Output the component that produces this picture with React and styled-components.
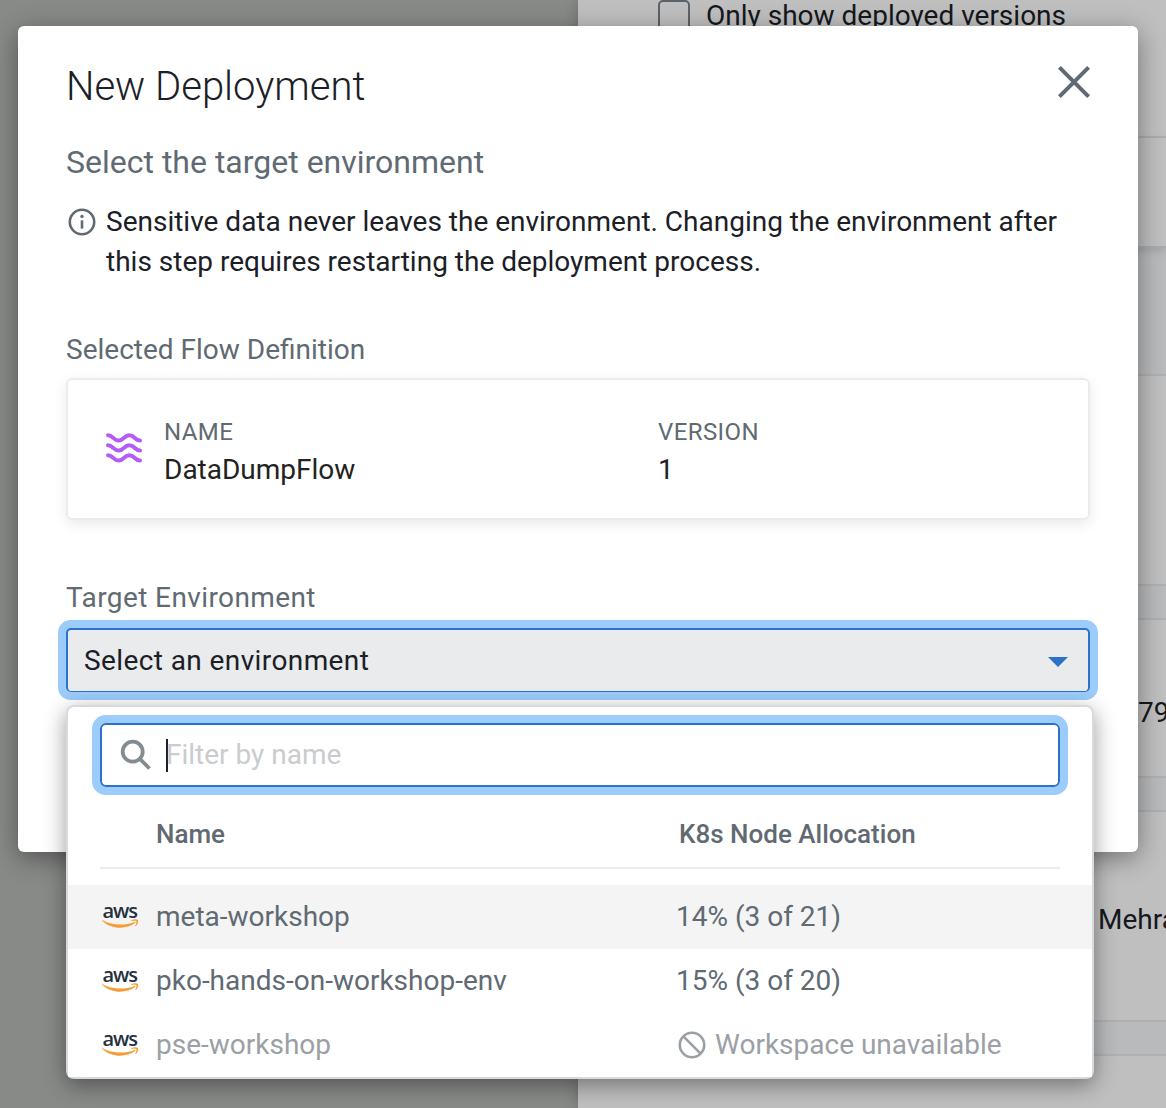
import React from "react";
import styled, { createGlobalStyle } from "styled-components";

const GlobalStyle = createGlobalStyle`
  *, *::before, *::after { box-sizing: border-box; }
  body { margin: 0; overflow: hidden; font-family: Roboto, "Noto Sans", sans-serif; }
  h1, h2, p { margin: 0; font-weight: 400; }
  svg { display: block; flex: none; }
`;

const Page = styled.main`
  position: relative;
  width: 1166px;
  height: 1108px;
  overflow: hidden;
  display: grid;
  grid-template-columns: 578px 1fr;
  background: #888a88;
  color: #1b2026;
  font-size: 28px;
  line-height: 40px;
`;

const SidePanel = styled.aside`
  grid-column: 2;
  display: flex;
  flex-direction: column;
  overflow: hidden;
  background: #bfbfbf;
  box-shadow: 0 0 12px rgba(0, 0, 0, 0.22);
  color: #14181c;
`;

const PanelSection = styled.section`
  flex: none;
  display: flex;
  align-items: ${(p) => p.$align || "center"};
  height: ${(p) => p.$height}px;
  padding-top: ${(p) => p.$drop || 0}px;
  padding-left: ${(p) => p.$indent || 0}px;
  background: ${(p) => (p.$band ? "#b8babc" : "#bfbfbf")};
  border-bottom: 2px solid #aeb0b1;
  white-space: nowrap;
`;

const RaisedSection = styled(PanelSection)`
  position: relative;
  border-bottom-color: #a9abac;
  box-shadow: 0 3px 8px rgba(0, 0, 0, 0.12);
`;

const CheckLabel = styled.label`
  display: flex;
  align-items: center;
  gap: 16px;
  height: 32px;
`;

const Checkbox = styled.span`
  width: 32px;
  height: 32px;
  border: 2px solid #5b6268;
  border-radius: 5px;
`;

const Dialog = styled.section`
  position: absolute;
  left: 18px;
  top: 26px;
  width: 1120px;
  height: 826px;
  padding: 36px 48px 0;
  border-radius: 6px;
  background: #fff;
  box-shadow: 0 6px 26px rgba(0, 0, 0, 0.4);
`;

const DialogHeader = styled.header`
  display: flex;
  align-items: center;
  justify-content: space-between;
  height: 48px;
`;

const Title = styled.h1`
  padding-top: 1px;
  font-size: 40px;
  line-height: 48px;
  font-weight: 300;
`;

const CloseButton = styled.button`
  padding: 0;
  border: 0;
  background: none;
  margin-top: -8px;
`;

const Subtitle = styled.h2`
  margin-top: 32px;
  color: #5f6a72;
  font-size: 32px;
  line-height: 40px;
`;

const Notice = styled.p`
  display: flex;
  gap: 10px;
  margin-top: 20px;
  padding-left: 2px;

  svg { margin-top: 6px; }
`;

const FieldLabel = styled.div`
  margin-top: ${(p) => p.$top}px;
  height: 40px;
  color: #5f6a72;
  letter-spacing: ${(p) => p.$spacing || 0}px;
`;

const FlowCard = styled.div`
  display: grid;
  grid-template-columns: 58px 494px 1fr;
  align-items: center;
  height: 142px;
  margin-top: 8px;
  padding: 0 38px;
  border: 2px solid #ebebeb;
  border-radius: 6px;
  box-shadow: 0 4px 14px rgba(0, 0, 0, 0.09);

  > svg { margin-bottom: 2px; }
`;

const Detail = styled.div`
  display: flex;
  flex-direction: column;
  padding-top: 6px;
  color: #222;
`;

const DetailLabel = styled.span`
  color: #5f6a72;
  font-size: 24px;
  line-height: 36px;
  letter-spacing: 0.4px;
`;

const SelectBox = styled.div`
  display: flex;
  align-items: center;
  justify-content: space-between;
  height: 64px;
  margin-top: 10px;
  padding: 0 20px 0 16px;
  border: 2px solid #2d72c9;
  border-bottom-width: 1px;
  border-radius: 5px;
  background: #e9ebec;
  box-shadow: 0 0 0 8px #9cccfb;
  letter-spacing: 0.4px;

  svg { margin-top: 2px; }
`;

const Dropdown = styled.section`
  position: absolute;
  left: 66px;
  top: 705px;
  width: 1028px;
  height: 374px;
  padding-top: 16px;
  border: 2px solid #d7d9de;
  border-radius: 8px;
  background: #fff;
  box-shadow: 0 6px 22px rgba(0, 0, 0, 0.4);
  color: #5f6a72;
`;

const SearchField = styled.div`
  display: flex;
  align-items: center;
  height: 64px;
  margin: 0 32px;
  padding-left: 18px;
  border: 2px solid #2d72c9;
  border-radius: 6px;
  box-shadow: 0 0 0 8px #9cccfb;
  color: #cacccf;
`;

const Caret = styled.span`
  width: 2px;
  height: 33px;
  margin: 0 -2px 0 14px;
  background: #1b2026;
`;

const TableHeader = styled.div`
  display: grid;
  grid-template-columns: 523px 1fr;
  align-items: center;
  height: 82px;
  margin: 0 32px 16px;
  padding: 14px 0 0 56px;
  border-bottom: 2px solid #ebebeb;
  font-size: 26px;
  font-weight: 500;
`;

const Row = styled.div`
  display: grid;
  grid-template-columns: 56px 520px 1fr;
  align-items: center;
  height: 64px;
  padding-left: 32px;
  background: ${(p) => (p.$active ? "#f4f4f4" : "#fff")};
  color: ${(p) => (p.$disabled ? "#9aa0a5" : "#5f6a72")};
`;

const Allocation = styled.span`
  display: flex;
  align-items: center;
  gap: 9px;
  padding-left: ${(p) => (p.$icon ? 2 : 0)}px;
`;

const AwsMark = styled.span`
  display: flex;
  flex-direction: column;
  width: 40px;
  height: 28px;
  padding-left: 2px;
  color: #252f3e;
  font: 600 20px/16px "Open Sans", "Noto Sans", sans-serif;
  letter-spacing: -1.1px;
`;

const AwsWord = styled.span`
  padding-left: 0.5px;
`;

function AwsLogo() {
  return (
    <AwsMark>
      <AwsWord>aws</AwsWord>
      <svg width="37" height="10" viewBox="0 0 37 10">
        <path d="M0.6 1.2 C10 6.6 23 6.8 32.4 2.9 C33.3 2.5 34 3.4 33.1 4.1 C24 10.6 9.6 10.4 0.2 1.9 C-.1 1.5 .2 1 .6 1.2Z" fill="#f79c34" />
        <path d="M29.4 1.3 C31.4 .1 34.6 0 35.7 .8 C36.8 1.8 35.8 5.4 33.8 7.2 C33.4 7.5 33.1 7.3 33.3 6.9 C34 5.2 34.8 3 34.3 2.2 C33.7 1.5 31.4 1.7 29.6 1.9 C29.1 2 29 1.6 29.4 1.3Z" fill="#f79c34" />
      </svg>
    </AwsMark>
  );
}

function WavesIcon() {
  return (
    <svg width="36" height="30" viewBox="0 0 36 30" fill="none" stroke="#b45cf8" strokeWidth="4" strokeLinecap="round">
      {[0, 10, 20].map((y) => (
        <path key={y} transform={`translate(0 ${y})`} d="M2 2.2 C7 2.2 7.5 7.6 12.7 7.6 S18 2.2 23.3 2.2 S29 7.6 34 7.6" />
      ))}
    </svg>
  );
}

const environments = [
  { name: "meta-workshop", allocation: "14% (3 of 21)", active: true },
  { name: "pko-hands-on-workshop-env", allocation: "15% (3 of 20)" },
  { name: "pse-workshop", allocation: "Workspace unavailable", disabled: true },
];

export default function App() {
  return (
    <Page>
      <GlobalStyle />
      <SidePanel>
        <PanelSection $height={138} $indent={80} $align="flex-start">
          <CheckLabel><Checkbox />Only show deployed versions</CheckLabel>
        </PanelSection>
        <RaisedSection $height={110} />
        <PanelSection $height={128} $band />
        <PanelSection $height={210} />
        <PanelSection $height={34} $band />
        <PanelSection $height={158} $indent={560} $drop={30}>79</PanelSection>
        <PanelSection $height={34} $band />
        <PanelSection $height={210} $indent={520} $drop={8}>Mehra</PanelSection>
        <PanelSection $height={34} $band />
      </SidePanel>

      <Dialog>
        <DialogHeader>
          <Title>New Deployment</Title>
          <CloseButton aria-label="Close">
            <svg width="32" height="32" viewBox="0 0 32 32" stroke="#5f6a72" strokeWidth="4">
              <path d="M1.4 1.4 L30.6 30.6 M30.6 1.4 L1.4 30.6" />
            </svg>
          </CloseButton>
        </DialogHeader>
        <Subtitle>Select the target environment</Subtitle>
        <Notice>
          <svg width="28" height="28" viewBox="0 0 28 28" fill="none" stroke="#5f6a72" strokeWidth="2.6">
            <circle cx="14" cy="14" r="12.2" />
            <path d="M14 12.4V20.6" />
            <circle cx="14" cy="8.4" r="1.7" fill="#5f6a72" stroke="none" />
          </svg>
          <span>
            Sensitive data never leaves the environment. Changing the environment after
            <br />
            this step requires restarting the deployment process.
          </span>
        </Notice>
        <FieldLabel $top={48}>Selected Flow Definition</FieldLabel>
        <FlowCard>
          <WavesIcon />
          <Detail><DetailLabel>NAME</DetailLabel>DataDumpFlow</Detail>
          <Detail><DetailLabel>VERSION</DetailLabel>1</Detail>
        </FlowCard>
        <FieldLabel $top={58} $spacing={0.4}>Target Environment</FieldLabel>
        <SelectBox>
          Select an environment
          <svg width="20" height="10" viewBox="0 0 20 10"><path d="M0 0H20L10 10Z" fill="#2d72c9" /></svg>
        </SelectBox>
      </Dialog>

      <Dropdown>
        <SearchField>
          <svg width="32" height="32" viewBox="0 0 32 32" fill="none" stroke="#858c91" strokeWidth="3.8">
            <circle cx="12.7" cy="12.7" r="10" />
            <path d="M20 20L29.5 29.5" />
          </svg>
          <Caret />
          Filter by name
        </SearchField>
        <TableHeader><span>Name</span><span>K8s Node Allocation</span></TableHeader>
        {environments.map((env) => (
          <Row key={env.name} $active={env.active} $disabled={env.disabled}>
            <AwsLogo />
            <span>{env.name}</span>
            <Allocation $icon={env.disabled}>
              {env.disabled && (
                <svg width="28" height="28" viewBox="0 0 28 28" fill="none" stroke="#9aa0a5" strokeWidth="2.6">
                  <circle cx="14" cy="14" r="12.2" />
                  <path d="M5.4 5.4L22.6 22.6" />
                </svg>
              )}
              {env.allocation}
            </Allocation>
          </Row>
        ))}
      </Dropdown>
    </Page>
  );
}
